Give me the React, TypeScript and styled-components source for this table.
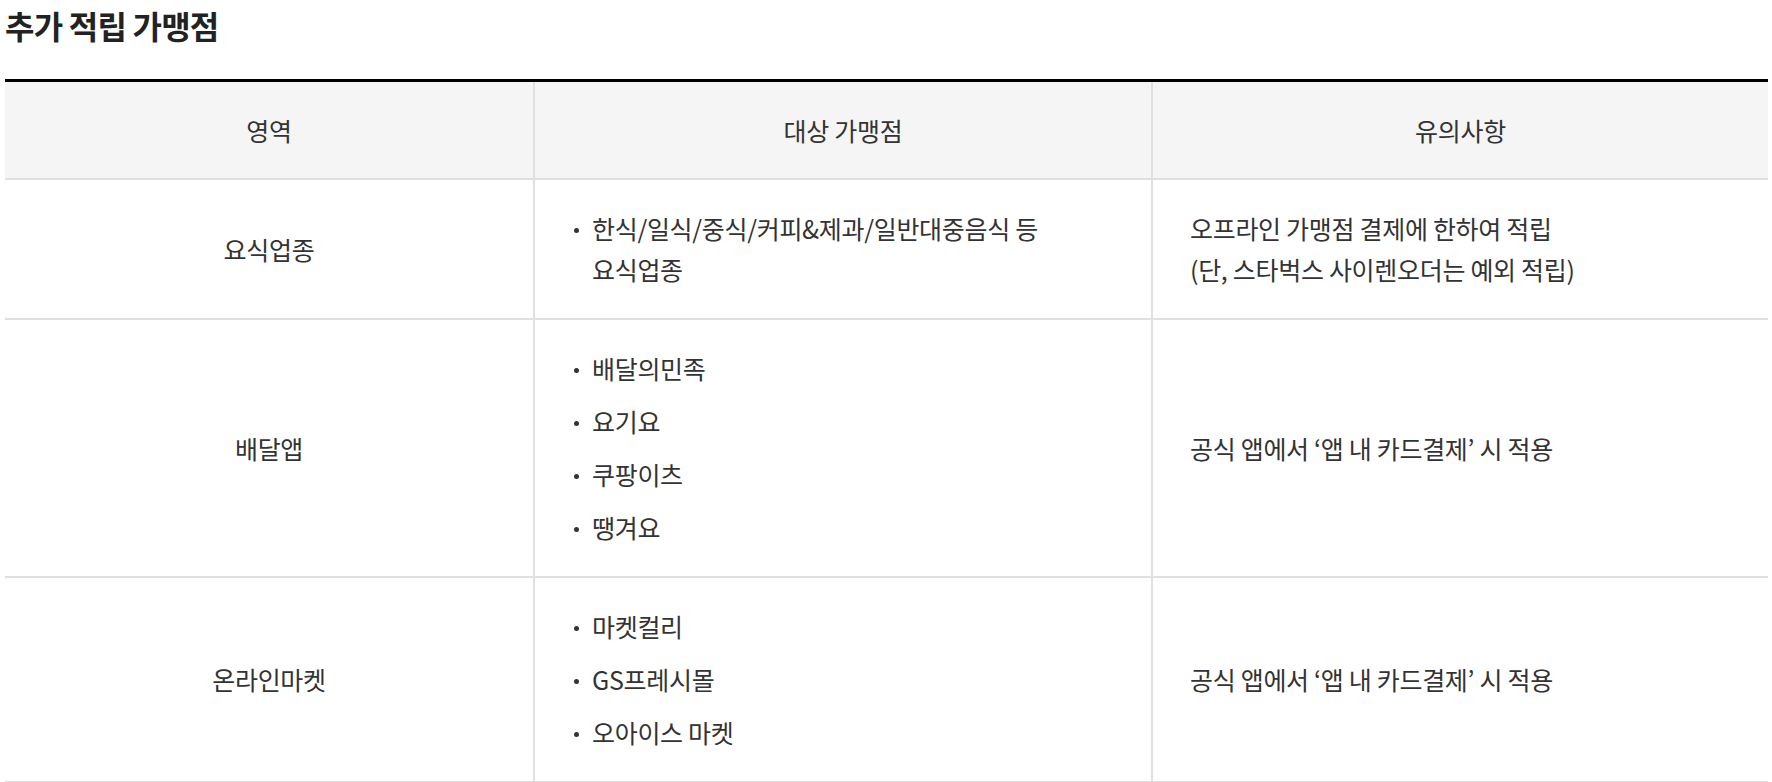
import React from "react";
import styled, { createGlobalStyle } from "styled-components";

const GlobalStyle = createGlobalStyle`
  html, body {
    margin: 0;
    padding: 0;
    background: #fff;
  }
  body {
    font-family: "Noto Sans CJK KR", "Noto Sans", sans-serif;
    color: #333;
  }
`;

const Page = styled.div`
  padding: 0 4px 0 5px;
`;

const Title = styled.h3`
  margin: 9px 0 0;
  font-size: 32px;
  line-height: 32px;
  font-weight: 700;
  letter-spacing: -0.8px;
  color: #222;
`;

const Table = styled.table`
  width: 100%;
  margin-top: 38px;
  border-collapse: collapse;
  table-layout: fixed;
  border-top: 3px solid #000;
  border-bottom: 2px solid #e0e0e0;
  font-size: 25px;
  line-height: 41px;
  letter-spacing: -0.3px;
`;

const Th = styled.th`
  height: 96px;
  padding: 0;
  background: #f5f5f5;
  font-weight: 400;
  color: #333;
  text-align: center;
  vertical-align: middle;
  border-bottom: 2px solid #e0e0e0;

  & + & {
    border-left: 2px solid #e0e0e0;
  }
`;

const Td = styled.td<{ $align?: "center" | "left" }>`
  padding: 28px 37px;
  text-align: ${p => p.$align ?? "left"};
  vertical-align: middle;
  color: #333;
  word-break: keep-all;
  border-bottom: 2px solid #e0e0e0;

  & + & {
    border-left: 2px solid #e0e0e0;
  }
`;

const List = styled.ul`
  margin: 0;
  padding: 0 0 0 2px;
  list-style: none;
  display: flex;
  flex-direction: column;
  gap: 12px;
`;

const Item = styled.li`
  display: flex;
  gap: 13px;

  &::before {
    content: "";
    flex: none;
    width: 5px;
    height: 5px;
    margin-top: 20px;
    border-radius: 50%;
    background: #333;
  }
`;

const rows = [
  {
    area: "요식업종",
    stores: ["한식/일식/중식/커피&제과/일반대중음식 등 요식업종"],
    note: ["오프라인 가맹점 결제에 한하여 적립", "(단, 스타벅스 사이렌오더는 예외 적립)"],
  },
  {
    area: "배달앱",
    stores: ["배달의민족", "요기요", "쿠팡이츠", "땡겨요"],
    note: ["공식 앱에서 ‘앱 내 카드결제’ 시 적용"],
  },
  {
    area: "온라인마켓",
    stores: ["마켓컬리", "GS프레시몰", "오아이스 마켓"],
    note: ["공식 앱에서 ‘앱 내 카드결제’ 시 적용"],
  },
];

export default function App() {
  return (
    <Page>
      <GlobalStyle />
      <Title>추가 적립 가맹점</Title>
      <Table>
        <colgroup>
          <col style={{ width: 529 }} />
          <col style={{ width: 618 }} />
          <col />
        </colgroup>
        <thead>
          <tr>
            <Th>영역</Th>
            <Th>대상 가맹점</Th>
            <Th>유의사항</Th>
          </tr>
        </thead>
        <tbody>
          {rows.map(row => (
            <tr key={row.area}>
              <Td $align="center">{row.area}</Td>
              <Td>
                <List>
                  {row.stores.map(s => (
                    <Item key={s}>
                      <span>{s}</span>
                    </Item>
                  ))}
                </List>
              </Td>
              <Td>
                {row.note.map((n, i) => (
                  <React.Fragment key={n}>
                    {i > 0 && <br />}
                    {n}
                  </React.Fragment>
                ))}
              </Td>
            </tr>
          ))}
        </tbody>
      </Table>
    </Page>
  );
}
